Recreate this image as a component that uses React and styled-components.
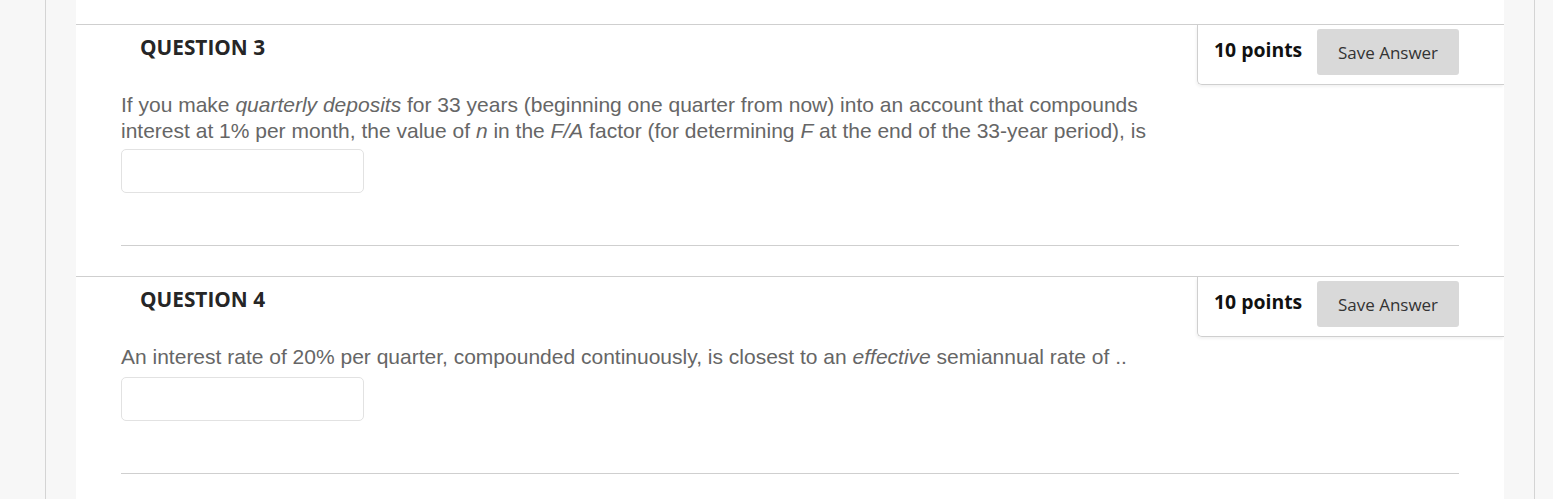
import React from "react";
import styled, { createGlobalStyle } from "styled-components";

const GlobalStyle = createGlobalStyle`
  html, body {
    margin: 0;
    padding: 0;
    background: #f7f7f7;
  }
`;

const Page = styled.div`
  display: flex;
  min-height: 499px;
  background: #f7f7f7;
`;

const Gutter = styled.div`
  width: ${(props) => props.width}px;
  flex-shrink: 0;
  display: flex;
`;

const GutterLine = styled.div`
  width: ${(props) => props.offset}px;
  border-right: 1px solid #d4d4d4;
`;

const Content = styled.main`
  width: 1428px;
  flex-shrink: 0;
  background: #fff;
  padding-top: 24px;
`;

const Question = styled.section`
  border-top: 1px solid #cfcfcf;
  padding-bottom: 30px;
`;

const Header = styled.div`
  display: flex;
  justify-content: space-between;
  align-items: flex-start;
`;

const Title = styled.h3`
  margin: 9px 0 0 64px;
  font-family: "Open Sans", sans-serif;
  font-weight: 700;
  font-size: 20.8px;
  line-height: 27px;
  color: #262626;
`;

const PointsBox = styled.div`
  width: 307px;
  height: 60px;
  box-sizing: border-box;
  display: flex;
  align-items: flex-start;
  padding: 4px 45px 0 16px;
  border-left: 1px solid #cfcfcf;
  border-bottom: 1px solid #cfcfcf;
  border-bottom-left-radius: 5px;
  box-shadow: -1px 2px 3px rgba(0, 0, 0, 0.05);
`;

const Points = styled.span`
  margin-top: 8px;
  font-family: "Open Sans", sans-serif;
  font-weight: 700;
  font-size: 19.4px;
  line-height: 26px;
  color: #111;
`;

const SaveButton = styled.button`
  margin-left: auto;
  width: 142px;
  height: 46px;
  border: none;
  border-radius: 3px;
  background: #d9d9d9;
  font-family: "Open Sans", sans-serif;
  font-size: 17px;
  color: #333;
  padding: 1px 0 0;
  cursor: pointer;
`;

const Body = styled.div`
  padding: 7px 45px 0 45px;
`;

const Prompt = styled.p`
  margin: 0;
  max-width: 1040px;
  font-family: "Liberation Sans", Arial, sans-serif;
  font-size: 21px;
  line-height: 26px;
  color: #666;
  em {
    font-style: italic;
  }
`;

const AnswerInput = styled.input`
  display: block;
  margin-top: ${(props) => props.gap}px;
  width: 243px;
  height: 44px;
  box-sizing: border-box;
  border: 1px solid #e2e2e2;
  border-radius: 5px;
  background: #fff;
  outline: none;
`;

const Divider = styled.hr`
  margin: 52px 0 0;
  border: none;
  border-top: 1px solid #cfcfcf;
`;

const QuestionBlock = ({ number, gap, children }) => (
  <Question>
    <Header>
      <Title>QUESTION {number}</Title>
      <PointsBox>
        <Points>10 points</Points>
        <SaveButton>Save Answer</SaveButton>
      </PointsBox>
    </Header>
    <Body>
      <Prompt>{children}</Prompt>
      <AnswerInput type="text" gap={gap} />
      <Divider />
    </Body>
  </Question>
);

export default function App() {
  return (
    <>
      <GlobalStyle />
      <Page>
        <Gutter width={76}>
          <GutterLine offset={45} />
        </Gutter>
        <Content>
          <QuestionBlock number={3} gap={5}>
            If you make <em>quarterly deposits</em> for 33 years (beginning one
            quarter from now) into an account that compounds interest at 1% per
            month, the value of <em>n</em> in the <em>F/A</em> factor (for
            determining <em>F</em> at the end of the 33-year period), is
          </QuestionBlock>
          <QuestionBlock number={4} gap={7}>
            An interest rate of 20% per quarter, compounded continuously, is
            closest to an <em>effective</em> semiannual rate of ..
          </QuestionBlock>
        </Content>
        <Gutter width={49}>
          <GutterLine offset={30} />
        </Gutter>
      </Page>
    </>
  );
}
